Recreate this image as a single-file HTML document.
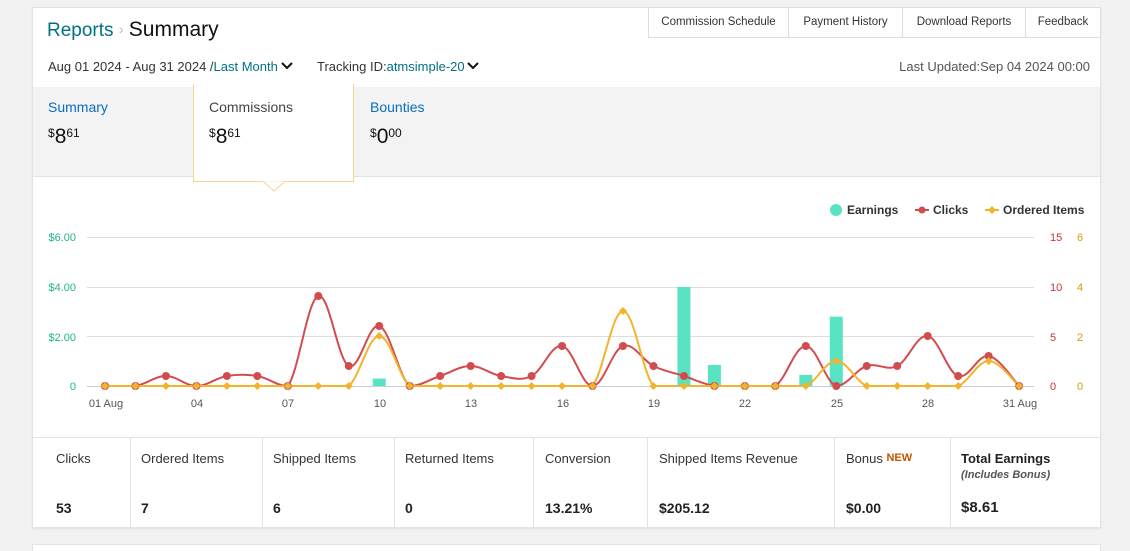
<!DOCTYPE html>
<html><head><meta charset="utf-8"><style>
*{box-sizing:border-box;margin:0;padding:0}
html,body{width:1130px;height:551px;overflow:hidden}
body{background:#f2f2f2;font-family:"Liberation Sans","DejaVu Sans",sans-serif;color:#111;position:relative}
.card{position:absolute;left:32px;top:7px;width:1069px;height:521px;background:#fff;border:1px solid #e3e3e3;box-shadow:0 1px 2px rgba(0,0,0,.08)}
.card2{position:absolute;left:32px;top:544px;width:1069px;height:7px;background:#fff;border:1px solid #e3e3e3;border-bottom:none}
.abs{position:absolute;white-space:nowrap}
.tabs{position:absolute;left:615px;top:-1px;height:31px;display:flex;border:1px solid #ddd;background:#fff}
.tabs div{font-size:11.5px;color:#333;line-height:29px;border-right:1px solid #ddd;white-space:nowrap;text-align:center}
.teal{color:#007185}
.blue{color:#0a6ebd}
.gray{position:absolute;left:0;top:79px;width:1067px;height:90px;background:#f3f3f3;border-bottom:1px solid #e3e3e3}
.amt{font-size:12px;color:#111}
.amt b{font-weight:normal;font-size:21px}
.stats{position:absolute;left:0;top:429px;width:1067px;height:91px;border-top:1px solid #e3e3e3;display:flex}
.stats>div{border-right:1px solid #e3e3e3;padding:13px 0 0 10px;font-size:13px;color:#333;position:relative;white-space:nowrap}
.stats>div:last-child{border-right:none}
.stats .v{position:absolute;top:62px;left:10px;font-weight:bold;font-size:14px;color:#222}
</style></head><body>
<div class="card">
  <div class="abs" style="left:14px;top:10px;font-size:19px"><span class="teal">Reports</span> <span style="color:#bbb;font-size:14px;position:relative;top:-2px">›</span> <span style="font-size:21px;color:#111">Summary</span></div>
  <div class="tabs"><div style="width:140px">Commission Schedule</div><div style="width:114px">Payment History</div><div style="width:123px">Download Reports</div><div style="width:74px;border-right:none">Feedback</div></div>
  <div class="abs" style="left:15px;top:51px;font-size:13px;color:#333">Aug 01 2024 - Aug 31 2024 /<span class="teal">Last Month</span><svg width="14" height="10" viewBox="0 0 14 10" style="margin-left:2px"><path d="M2 2l5 5 5-5" fill="none" stroke="#111" stroke-width="2"/></svg></div>
  <div class="abs" style="left:284px;top:51px;font-size:13px;color:#333">Tracking ID:<span class="teal">atmsimple-20</span><svg width="14" height="10" viewBox="0 0 14 10" style="margin-left:1px"><path d="M2 2l5 5 5-5" fill="none" stroke="#111" stroke-width="2"/></svg></div>
  <div class="abs" style="right:10px;top:51px;font-size:13px;color:#555">Last Updated:Sep 04 2024 00:00</div>
  <div class="gray"></div>
  <div class="abs blue" style="left:15px;top:91px;font-size:14px">Summary</div>
  <div class="abs amt" style="left:15px;top:117px"><span style="vertical-align:6px">$</span><b>8</b><span style="vertical-align:6px">61</span></div>
  <div class="abs" style="left:160px;top:76px;width:161px;height:98px;background:#fff;border:1px solid #f7d48f;border-top:none"></div>
  <svg class="abs" style="left:228px;top:172px" width="26" height="14"><path d="M0 1.5H2L13 11 24 1.5H26" fill="#fff" stroke="#f7d48f" stroke-width="1"/><rect x="1" y="0" width="24" height="1.2" fill="#fff"/></svg>
  <div class="abs" style="left:176px;top:91px;font-size:14px;color:#444">Commissions</div>
  <div class="abs amt" style="left:176px;top:117px"><span style="vertical-align:6px">$</span><b>8</b><span style="vertical-align:6px">61</span></div>
  <div class="abs blue" style="left:337px;top:91px;font-size:14px">Bounties</div>
  <div class="abs amt" style="left:337px;top:117px"><span style="vertical-align:6px">$</span><b>0</b><span style="vertical-align:6px">00</span></div>
  <div class="stats">
    <div style="width:98px;padding-left:23px">Clicks<span class="v" style="left:23px">53</span></div>
    <div style="width:132px">Ordered Items<span class="v">7</span></div>
    <div style="width:132px">Shipped Items<span class="v">6</span></div>
    <div style="width:139px">Returned Items<span class="v">0</span></div>
    <div style="width:114px;padding-left:11px">Conversion<span class="v" style="left:11px">13.21%</span></div>
    <div style="width:187px;padding-left:11px">Shipped Items Revenue<span class="v" style="left:11px">$205.12</span></div>
    <div style="width:116px;padding-left:11px">Bonus <b style="color:#c45500;font-size:11px;vertical-align:2px">NEW</b><span class="v" style="left:11px">$0.00</span></div>
    <div style="width:149px;padding-left:10px"><b style="color:#222">Total Earnings</b><br><i style="font-size:11px;color:#555;font-weight:bold">(Includes Bonus)</i><span class="v" style="left:10px;top:61px;font-size:15px">$8.61</span></div>
  </div>
</div>
<div class="card2"></div>
<svg class="abs" style="left:0;top:0" width="1130" height="551">
  <g stroke="#ddd" stroke-width="1"><line x1="87" y1="237.5" x2="1034" y2="237.5"/><line x1="87" y1="287.5" x2="1034" y2="287.5"/><line x1="87" y1="336.5" x2="1034" y2="336.5"/></g>
  <line x1="87" y1="386.5" x2="1034" y2="386.5" stroke="#c5cfdc"/>
  <g font-size="11" fill="#1fb58f" text-anchor="end" font-family="Liberation Sans,sans-serif"><text x="76" y="241">$6.00</text><text x="76" y="291">$4.00</text><text x="76" y="341">$2.00</text><text x="76" y="390">0</text></g>
  <g font-size="11" fill="#c9343a" font-family="Liberation Sans,sans-serif"><text x="1050" y="241">15</text><text x="1050" y="291">10</text><text x="1050" y="341">5</text><text x="1050" y="390">0</text></g>
  <g font-size="11" fill="#d59a12" font-family="Liberation Sans,sans-serif"><text x="1077" y="241">6</text><text x="1077" y="291">4</text><text x="1077" y="341">2</text><text x="1077" y="390">0</text></g>
  <g font-size="11" fill="#555" text-anchor="middle" font-family="Liberation Sans,sans-serif"><text x="106" y="407">01 Aug</text><text x="197" y="407">04</text><text x="288" y="407">07</text><text x="380" y="407">10</text><text x="471" y="407">13</text><text x="563" y="407">16</text><text x="654" y="407">19</text><text x="745" y="407">22</text><text x="837" y="407">25</text><text x="928" y="407">28</text><text x="1020" y="407">31 Aug</text></g>
  <g id="bars" fill="#58e3c3"></g>
  <path id="cl" fill="none" stroke="#d24c4f" stroke-width="2"/>
  <path id="ol" fill="none" stroke="#f0b52c" stroke-width="2"/>
  <g id="cm" fill="#d24c4f"></g><g id="om" fill="#f0b52c"></g>
  <circle cx="836" cy="210" r="6" fill="#58e3c3"/><text x="847" y="214" font-size="12" font-weight="bold" fill="#333" font-family="Liberation Sans,sans-serif">Earnings</text>
  <line x1="915" y1="210" x2="929" y2="210" stroke="#d24c4f" stroke-width="2"/><circle cx="922" cy="210" r="3.5" fill="#d24c4f"/><text x="933" y="214" font-size="12" font-weight="bold" fill="#333" font-family="Liberation Sans,sans-serif">Clicks</text>
  <line x1="985" y1="210" x2="999" y2="210" stroke="#f0b52c" stroke-width="2"/><path d="M992 206l4 4-4 4-4-4z" fill="#f0b52c"/><text x="1003" y="214" font-size="12" font-weight="bold" fill="#333" font-family="Liberation Sans,sans-serif">Ordered Items</text>
</svg>
<script>
var X=function(d){return 105+(d-1)*30.47};
var c=[0,0,1,0,1,1,0,9,2,6,0,1,2,1,1,4,0,4,2,1,0,0,0,4,0,2,2,5,1,3,0];
var o=[0,0,0,0,0,0,0,0,0,2,0,0,0,0,0,0,0,3,0,0,0,0,0,0,1,0,0,0,0,1,0];
var e={10:0.3,20:4.0,21:0.85,24:0.45,25:2.8};
function pts(a,s){return a.map(function(v,i){return [X(i+1),386-v*s]})}
function cy(v){return Math.min(386,v)}
function spline(p){var d='M'+p[0][0]+' '+p[0][1];for(var i=0;i<p.length-1;i++){var p0=p[i-1]||p[i],p1=p[i],p2=p[i+1],p3=p[i+2]||p2;var t=0.18;d+=' C'+(p1[0]+(p2[0]-p0[0])*t)+' '+cy(p1[1]+(p2[1]-p0[1])*t)+' '+(p2[0]-(p3[0]-p1[0])*t)+' '+cy(p2[1]-(p3[1]-p1[1])*t)+' '+p2[0]+' '+p2[1];}return d}
var ns='http://www.w3.org/2000/svg',b=document.getElementById('bars');
for(var k in e){var r=document.createElementNS(ns,'rect');var h=e[k]*24.75;r.setAttribute('x',X(+k)-6.5);r.setAttribute('y',386-h);r.setAttribute('width',13);r.setAttribute('height',h);b.appendChild(r);}
var pc=pts(c,10),po=pts(o,25);
document.getElementById('cl').setAttribute('d',spline(pc));
document.getElementById('ol').setAttribute('d',spline(po));
var cm=document.getElementById('cm'),om=document.getElementById('om');
pc.forEach(function(p){var q=document.createElementNS(ns,'circle');q.setAttribute('cx',p[0]);q.setAttribute('cy',p[1]);q.setAttribute('r',4);cm.appendChild(q)});
po.forEach(function(p){var q=document.createElementNS(ns,'path');q.setAttribute('d','M'+p[0]+' '+(p[1]-4)+'l4 4-4 4-4-4z');om.appendChild(q)});
</script>
</body></html>
